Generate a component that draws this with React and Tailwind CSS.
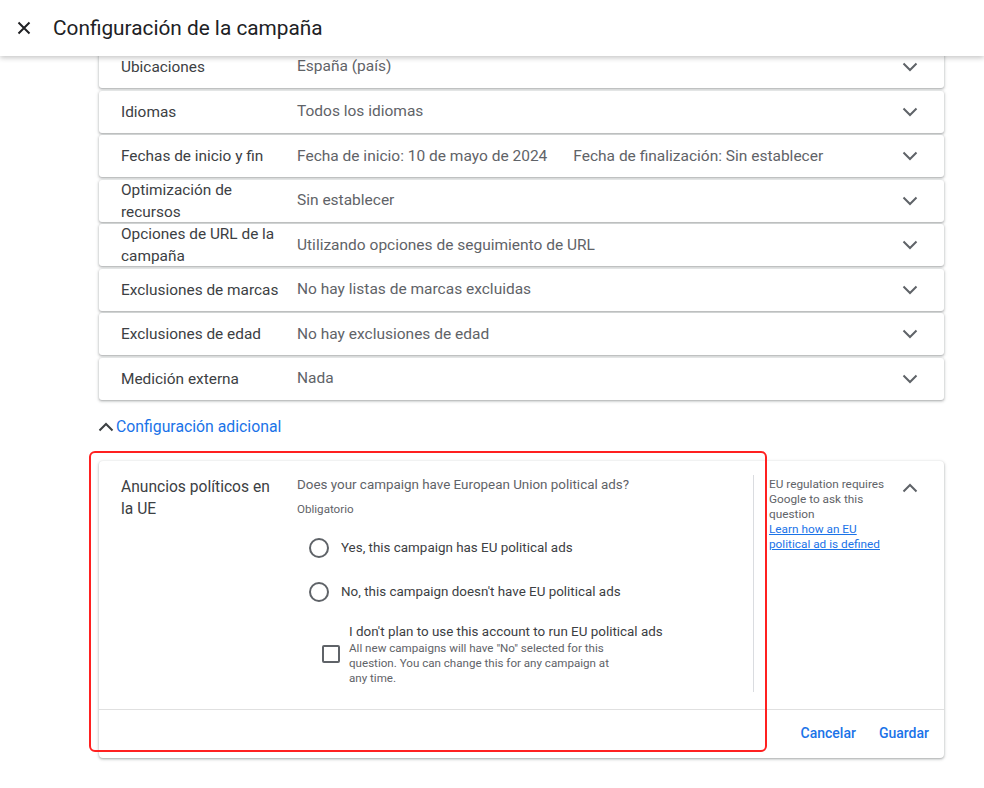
import React from "react";

const ChevronDown = () => (
  <svg width="16" height="10" viewBox="0 0 16 10" className="shrink-0">
    <polyline points="1.5,1.5 8,8 14.5,1.5" fill="none" stroke="#5f6368" strokeWidth="2" />
  </svg>
);

const ChevronUp = ({ color = "#5f6368" }) => (
  <svg width="16" height="10" viewBox="0 0 16 10" className="shrink-0">
    <polyline points="1.5,8.5 8,2 14.5,8.5" fill="none" stroke={color} strokeWidth="2" />
  </svg>
);

const rows = [
  { label: "Ubicaciones", value: "España (país)" },
  { label: "Idiomas", value: "Todos los idiomas" },
  { label: "Fechas de inicio y fin", value: "Fecha de inicio: 10 de mayo de 2024", value2: "Fecha de finalización: Sin establecer" },
  { label: "Optimización de recursos", value: "Sin establecer" },
  { label: "Opciones de URL de la campaña", value: "Utilizando opciones de seguimiento de URL" },
  { label: "Exclusiones de marcas", value: "No hay listas de marcas excluidas" },
  { label: "Exclusiones de edad", value: "No hay exclusiones de edad" },
  { label: "Medición externa", value: "Nada" },
];

const cardShadow = "shadow-[0_1px_2px_rgba(60,64,67,0.3),0_1px_3px_1px_rgba(60,64,67,0.15)]";

export default function App() {
  return (
    <div className="w-[984px] h-[788px] bg-white overflow-hidden font-['Roboto',sans-serif] text-[#202124]">
      <header className="relative z-10 h-[56px] bg-white flex items-center shadow-[0_2px_5px_rgba(0,0,0,0.22)]">
        <svg width="14" height="14" viewBox="0 0 14 14" className="ml-[17px]">
          <path d="M1.5 1.5 L12.5 12.5 M12.5 1.5 L1.5 12.5" stroke="#202124" strokeWidth="2" />
        </svg>
        <h1 className="ml-[22px] text-[20.8px] leading-none text-[#202124]">Configuración de la campaña</h1>
      </header>

      <main className="pl-[99px] w-[944px] -mt-[10px]">
        <div className="flex flex-col gap-[2.57px]">
          {rows.map((r) => (
            <div key={r.label} className={`h-[42px] bg-white rounded-[3px] ${cardShadow} flex items-center pl-[22px] pr-[26px]`}>
              <div className="w-[176px] shrink-0 text-[15.4px] leading-[22px] text-[#3c4043] pr-3">{r.label}</div>
              <div className="flex-1 flex text-[15.5px] text-[#5f6368] gap-[26px]">
                <span>{r.value}</span>
                {r.value2 && <span>{r.value2}</span>}
              </div>
              <ChevronDown />
            </div>
          ))}
        </div>

        <div className="mt-[17px] -ml-[1px] flex items-center gap-[2px] h-[20px]">
          <ChevronUp color="#3c4043" />
          <span className="text-[15.8px] text-[#1a73e8]">Configuración adicional</span>
        </div>

        <div className="relative mt-[24px]">
          <div className={`bg-white rounded-[4px] ${cardShadow}`}>
            <div className="flex pt-[14px]">
              <div className="w-[198px] shrink-0 pl-[22px] pt-[1px] text-[15.6px] leading-[22px] text-[#3c4043]">
                Anuncios políticos en
                <br />
                la UE
              </div>
              <div className="w-[457px] shrink-0 border-r border-[#dadce0] pb-[6px]">
                <div className="text-[13.4px] leading-[20px] text-[#5f6368]">Does your campaign have European Union political ads?</div>
                <div className="mt-[6px] text-[11.6px] leading-[16px] text-[#5f6368]">Obligatorio</div>
                <div className="mt-[19px] flex items-center h-[24px] pl-[12px]">
                  <span className="w-[20px] h-[20px] rounded-full border-2 border-[#5f6368]" />
                  <span className="ml-[12px] text-[13.4px] text-[#3c4043]">Yes, this campaign has EU political ads</span>
                </div>
                <div className="mt-[20px] flex items-center h-[24px] pl-[12px]">
                  <span className="w-[20px] h-[20px] rounded-full border-2 border-[#5f6368]" />
                  <span className="ml-[12px] text-[13.4px] text-[#3c4043]">No, this campaign doesn't have EU political ads</span>
                </div>
                <div className="mt-[19px] flex items-center pl-[25px]">
                  <span className="w-[18px] h-[18px] rounded-[2px] border-2 border-[#5f6368] shrink-0" />
                  <div className="ml-[9px]">
                    <div className="text-[13.4px] leading-[18px] text-[#3c4043]">I don't plan to use this account to run EU political ads</div>
                    <div className="w-[275px] text-[11.6px] leading-[15px] text-[#5f6368]">
                      All new campaigns will have "No" selected for this question. You can change this for any campaign at any time.
                    </div>
                  </div>
                </div>
              </div>
              <div className="flex-1 flex pl-[15px] pr-[26px]">
                <div className="w-[124px] text-[11.8px] leading-[15px] text-[#5f6368] pt-[2px]">
                  EU regulation requires Google to ask this question
                  <br />
                  <a className="text-[#1a73e8] underline">Learn how an EU political ad is defined</a>
                </div>
                <div className="ml-auto pt-[8px]">
                  <ChevronUp />
                </div>
              </div>
            </div>
            <div className="mt-[17px] border-t border-[#e0e0e0] h-[49px] flex items-center justify-end pr-[15px] gap-[23px]">
              <button className="text-[14px] font-medium text-[#1a73e8]">Cancelar</button>
              <button className="text-[14px] font-medium text-[#1a73e8]">Guardar</button>
            </div>
          </div>
          <div className="absolute left-[-10px] top-[-10px] w-[678px] h-[301px] border-2 border-[#ff2020] rounded-[6px] pointer-events-none" />
        </div>
      </main>
    </div>
  );
}
